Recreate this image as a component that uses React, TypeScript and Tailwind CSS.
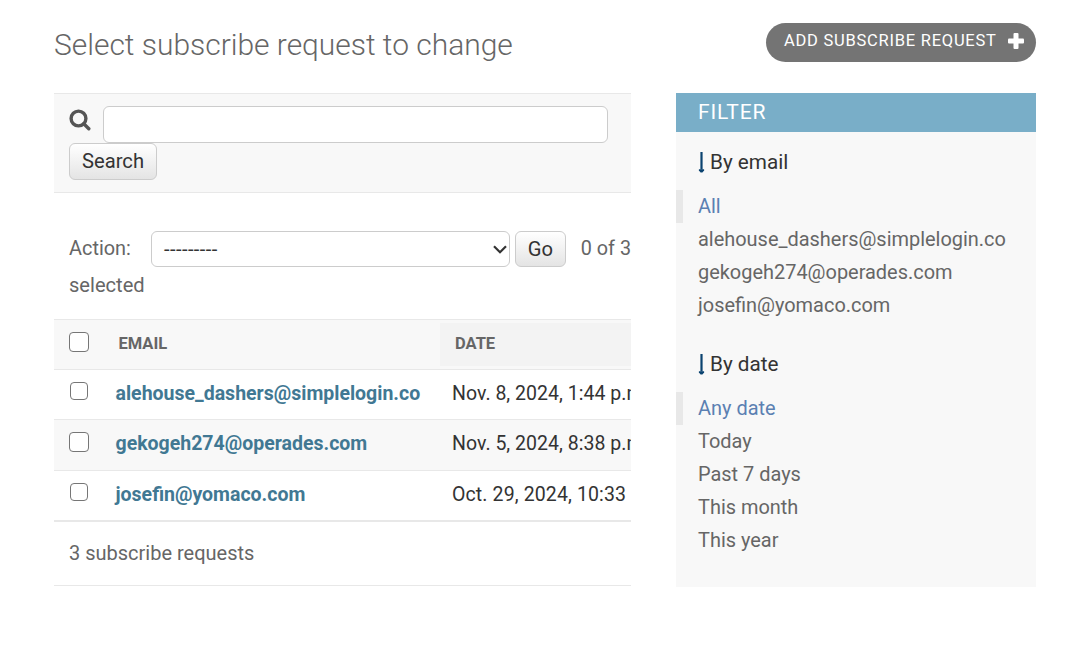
import React from "react";

type Row = { email: string; date: string; height: string; shaded: boolean; box: string; tracking: string };

const rows: Row[] = [
  { email: "alehouse_dashers@simplelogin.co", date: "Nov. 8, 2024, 1:44 p.m.", height: "h-[50px] border-b", shaded: false, box: "size-[18px] mt-3 ml-px", tracking: "tracking-[0.02px]" },
  { email: "gekogeh274@operades.com", date: "Nov. 5, 2024, 8:38 p.m.", height: "h-[51px] border-b", shaded: true, box: "size-5 mt-3", tracking: "tracking-[0.02px]" },
  { email: "josefin@yomaco.com", date: "Oct. 29, 2024, 10:33 a.m.", height: "h-[49px]", shaded: false, box: "size-[18px] mt-3 ml-px", tracking: "tracking-[0.12px]" },
];

const emails = ["All", "alehouse_dashers@simplelogin.co", "gekogeh274@operades.com", "josefin@yomaco.com"];
const dates = ["Any date", "Today", "Past 7 days", "This month", "This year"];

function CheckBox({ size }: { size: string }) {
  return (
    <input
      type="checkbox"
      className={`block shrink-0 appearance-none rounded-[4px] border-[1.5px] border-[#767676] bg-white ${size}`}
    />
  );
}

function FilterGroup({ title, items }: { title: string; items: string[] }) {
  return (
    <section>
      <h3 className="flex h-[28px] items-center pl-[22px] text-[20.7px] leading-[28px] text-[#333]">
        <svg width="7" height="22" viewBox="0 0 7 22" className="mr-[5px] shrink-0">
          <path d="M2.4 1h2.2v17.5H2.4z" fill="#0b4370" />
          <path d="M.9 18.2h5.2v1.3L4.4 21.5H2.6L.9 19.5z" fill="#0b4370" />
        </svg>
        <span>{title}</span>
      </h3>
      <ul className="mt-[14px]">
        {items.map((item, i) => (
          <li
            key={item}
            className={
              i === 0
                ? "h-[33px] border-l-[7px] border-[#e8e8e8] pl-[15px] text-[19.95px] leading-[33px] text-[#5b80b2]"
                : "h-[33px] pl-[22px] text-[19.95px] leading-[33px] text-[#666]"
            }
          >
            {item}
          </li>
        ))}
      </ul>
    </section>
  );
}

export default function App() {
  return (
    <div className="h-[664px] w-[1082px] overflow-hidden bg-white pr-[46px] pl-[54px] font-['Roboto',sans-serif] text-[19.5px] text-[#666]">
      <header className="flex h-[93px] items-start justify-between">
        <h1 className="mt-[27px] text-[29.95px] leading-9 font-light text-[#666]">Select subscribe request to change</h1>
        <a className="mt-[23px] flex h-[39px] w-[270px] rounded-full bg-[#747474] pl-[18px] text-[16.5px] leading-[36px] tracking-[0.75px] whitespace-nowrap text-white">
          <span className="w-[224px]">ADD SUBSCRIBE REQUEST</span>
          <svg width="16" height="16" viewBox="0 0 16 16" className="mt-[10px]" fill="#fff">
            <rect x="5.5" y="0" width="5" height="16" rx="1" />
            <rect x="0" y="5.5" width="16" height="5" rx="1" />
          </svg>
        </a>
      </header>
      <div className="flex items-start justify-between">
        <main className="w-[577px] overflow-hidden">
          <div className="h-[100px] border-y border-[#e8e8e8] bg-[#f8f8f8] pt-3 pl-[15px]">
            <div className="flex">
              <svg width="22" height="22" viewBox="0 0 22 22" className="mt-[3px] mr-[12px]" fill="none" stroke="#555">
                <circle cx="9.5" cy="9.5" r="7.4" strokeWidth="3.4" />
                <path d="M14.8 14.8l5 5" strokeWidth="3.4" strokeLinecap="round" />
              </svg>
              <input className="h-[37px] w-[505px] rounded-[6px] border border-[#ccc] bg-white px-2" />
            </div>
            <button className="block h-[37px] w-[88px] rounded-[6px] border border-[#ccc] bg-linear-to-b from-white to-[#e4e4e4] text-[20.2px] leading-[35px] text-[#333]">
              <span className="block h-[35px]">Search</span>
            </button>
          </div>
          <div className="h-[126px] pt-[38px] pl-[15px]">
            <div className="flex h-9 whitespace-nowrap">
              <span className="w-[82px] text-[19.9px] leading-[35px]">Action:</span>
              <div className="flex w-[359px] items-center justify-between rounded-[6px] border border-[#ccc] bg-white pr-[2px] pl-3 text-[#333]">
                <span className="text-[20px] leading-none tracking-[0.45px]">---------</span>
                <svg width="14" height="9" viewBox="0 0 14 9" fill="none" stroke="#333" strokeWidth="2.2">
                  <path d="M1 1.3l6 6 6-6" />
                </svg>
              </div>
              <button className="ml-[5px] w-[51px] rounded-[6px] border border-[#ccc] bg-linear-to-b from-white to-[#e4e4e4] text-[20.2px] leading-[34px] text-[#333]">
                Go
              </button>
              <span className="ml-[15px] text-[19.8px] leading-[35px]">0 of 3</span>
            </div>
            <div className="h-[37px] text-[20.1px] leading-[37px]">selected</div>
          </div>
          <div className="flex h-[51px] border-y border-[#e8e8e8] bg-[#f8f8f8] pl-[15px] text-[16.5px] leading-[47px] font-bold">
            <div className="w-[49.5px] pt-3">
              <CheckBox size="size-5" />
            </div>
            <div className="w-[321.5px]">EMAIL</div>
            <div className="my-[3px] flex-1 bg-[#f3f3f3] pl-[15px] leading-[41px]">DATE</div>
          </div>
          {rows.map((row) => (
            <div
              key={row.email}
              className={`flex border-[#e8e8e8] pl-[15px] leading-[47px] whitespace-nowrap ${row.height} ${row.shaded ? "bg-[#f8f8f8]" : "bg-white"}`}
            >
              <div className="w-[46.5px] shrink-0">
                <CheckBox size={row.box} />
              </div>
              <div className="w-[336.5px] shrink-0 font-bold text-[#417893]">{row.email}</div>
              <div className={`text-[#333] ${row.tracking}`}>{row.date}</div>
            </div>
          ))}
          <div className="h-[66px] border-t-2 border-b border-[#e8e8e8] pl-[15px] text-[20px] leading-[63px]">3 subscribe requests</div>
        </main>
        <aside className="h-[494px] w-[360px] bg-[#f8f8f8]">
          <h2 className="h-[39px] bg-[#79aec8] pl-[22px] text-[21px] leading-[38px] tracking-[0.85px] text-white">FILTER</h2>
          <div className="flex flex-col gap-[28px] pt-[16px]">
            <FilterGroup title="By email" items={emails} />
            <FilterGroup title="By date" items={dates} />
          </div>
        </aside>
      </div>
    </div>
  );
}
